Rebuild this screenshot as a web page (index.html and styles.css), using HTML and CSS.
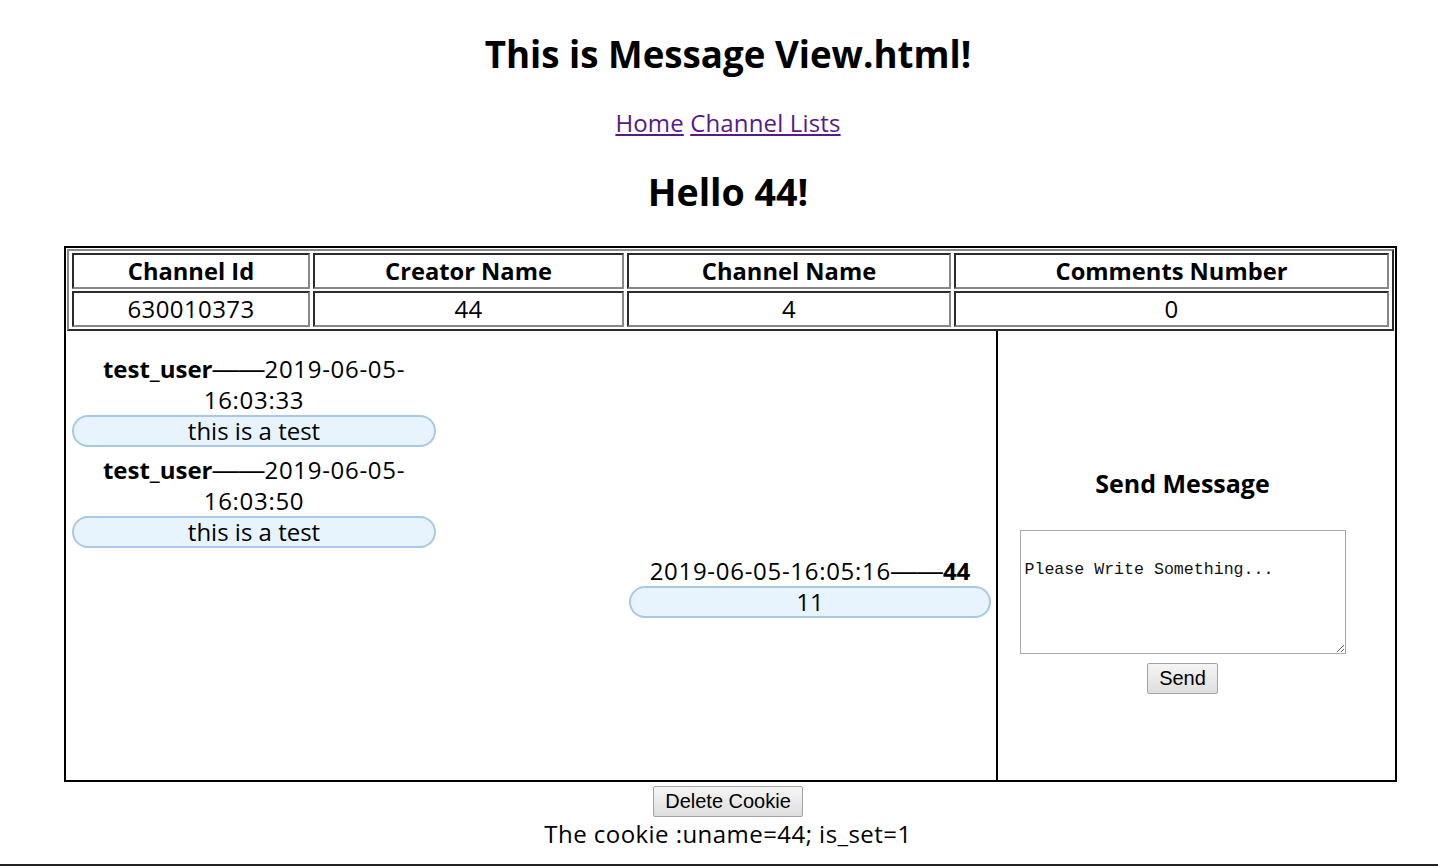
FILE: index.html
```html
<!DOCTYPE html>
<html lang="en">
<head>
<meta charset="utf-8">
<title>Message View</title>
<link rel="stylesheet" href="styles.css">
</head>
<body>
<div class="page">
  <h1 class="title">This is Message View.html!</h1>
  <nav class="nav"><a href="#home" class="link">Home</a> <a href="#lists" class="link">Channel Lists</a></nav>
  <h2 class="hello">Hello 44!</h2>

  <div class="board">
    <table class="info">
      <tr>
        <th class="c1">Channel Id</th>
        <th class="c2">Creator Name</th>
        <th class="c3">Channel Name</th>
        <th class="c4">Comments Number</th>
      </tr>
      <tr>
        <td>630010373</td>
        <td>44</td>
        <td>4</td>
        <td>0</td>
      </tr>
    </table>
    <div class="chat">
      <div class="messages">
        <div class="msg">
          <div class="msg-head"><b>test_user</b><span class="dash">——</span><span class="time">2019-06-05-</span><span class="time">16:03:33</span></div>
          <div class="bubble">this is a test</div>
        </div>
        <div class="msg">
          <div class="msg-head"><b>test_user</b><span class="dash">——</span><span class="time">2019-06-05-</span><span class="time">16:03:50</span></div>
          <div class="bubble">this is a test</div>
        </div>
        <div class="msg msg-own">
          <div class="msg-head"><span class="time">2019-06-05-16:05:16</span><span class="dash">——</span><b>44</b></div>
          <div class="bubble">11</div>
        </div>
      </div>
      <div class="sender">
        <h3 class="send-title">Send Message</h3>
        <textarea class="input">Please Write Something...</textarea>
        <button class="btn" type="button">Send</button>
      </div>
    </div>
  </div>

  <button class="btn btn-delete" type="button">Delete Cookie</button>
  <div class="cookie">The cookie :uname=44; is_set=1</div>
</div>
<div class="bottom-rule"></div>
</body>
</html>
```
FILE: styles.css
```css
html, body {
  margin: 0;
  padding: 0;
  background: #fff;
}
body {
  font-family: "Open Sans", "Noto Sans CJK SC", sans-serif;
  font-size: 24px;
  color: #000;
  overflow: hidden;
}
.page {
  margin-left: 18px;
  width: 1420px;
  text-align: center;
}
.title {
  margin: 28px 0 0;
  font-size: 36.7px;
  line-height: 53px;
  font-weight: 700;
}
.nav {
  margin-top: 27px;
  line-height: 30px;
  letter-spacing: 0.15px;
}
.link {
  color: #551a8b;
  text-decoration: underline;
}
.hello {
  margin: 34px 0 0;
  font-size: 37.6px;
  line-height: 40px;
  font-weight: 700;
}
.board {
  margin: 34px 0 0 46px;
  width: 1333px;
  height: 536px;
  box-sizing: border-box;
  border: 2px solid #000;
  display: flex;
  flex-direction: column;
  text-align: left;
}
.info {
  margin: 1px 1px 0;
  width: 1327px;
  table-layout: fixed;
  border-collapse: separate;
  border-spacing: 3px 2px;
  border: 2px solid;
  border-color: #888 #2b2b2b #2b2b2b #888;
  flex: none;
}
.info th, .info td {
  box-sizing: border-box;
  border: 2px solid;
  border-color: #2b2b2b #888 #888 #2b2b2b;
  padding: 1px;
  line-height: 30px;
  text-align: center;
  font-size: 24px;
}
.info td {
  letter-spacing: 0.4px;
}
.info th {
  font-weight: 700;
  font-size: 23.7px;
}
.c1 { width: 238px; }
.c2 { width: 311px; }
.c3 { width: 324px; }
.c4 { width: 435px; }
.chat {
  flex: 1;
  display: flex;
  min-height: 0;
}
.messages {
  flex: 1;
  padding-top: 22px;
  display: flex;
  flex-direction: column;
}
.msg {
  width: 364px;
  margin: 0 0 7px 6px;
  text-align: center;
}
.msg-own {
  width: 362px;
  margin-left: auto;
  margin-right: 5px;
}
.msg-head {
  line-height: 31px;
}
.time {
  letter-spacing: 0.7px;
}
.dash {
  font-family: "Liberation Sans", Arial, sans-serif;
  font-size: 26px;
  line-height: 20px;
}
.bubble {
  box-sizing: border-box;
  height: 32px;
  line-height: 28px;
  border: 2px solid #a9c8e3;
  border-radius: 16px;
  background: #e8f4fd;
}
.sender {
  width: 369px;
  padding: 137px 28px 0 0;
  border-left: 2px solid #000;
  display: flex;
  flex-direction: column;
  align-items: center;
}
.send-title {
  margin: 0;
  font-size: 25px;
  line-height: 30px;
  font-weight: 700;
}
.input {
  display: block;
  margin-top: 32px;
  width: 326px;
  height: 124px;
  box-sizing: border-box;
  border: 1px solid #a9a9a9;
  padding: 29px 3px 2px 4px;
  font-family: "Liberation Mono", monospace;
  font-size: 16.6px;
  line-height: 19px;
  color: #111;
  background: #fff;
  resize: both;
}
.btn {
  font-family: "Liberation Sans", Arial, sans-serif;
  font-size: 20px;
  line-height: 23px;
  padding: 3px 11px;
  border: 1px solid #a3a3a3;
  border-radius: 2px;
  background: linear-gradient(#f5f5f5, #dedede);
  color: #000;
  margin-top: 9px;
}
.btn-delete {
  margin-top: 4px;
}
.cookie {
  line-height: 31px;
  margin-top: 1px;
  letter-spacing: 0.45px;
}
.bottom-rule {
  margin-top: 15px;
  border-top: 2px solid #222;
}
```
